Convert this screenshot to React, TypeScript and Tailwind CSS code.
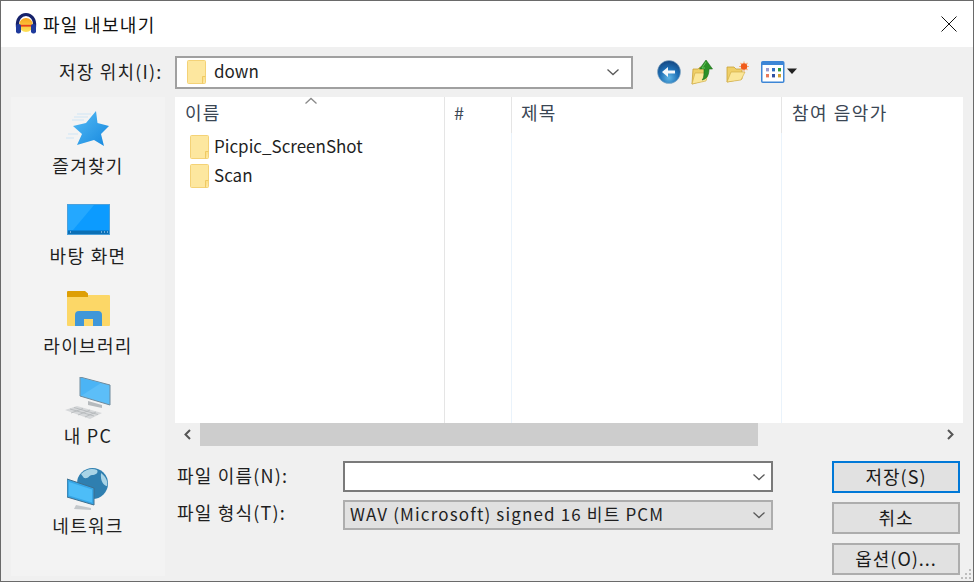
const FONT = "font-['Noto_Sans_CJK_KR','Noto_Sans',sans-serif]";

function AudacityIcon() {
  return (
    <svg width="24" height="24" viewBox="0 0 24 24" className="shrink-0">
      <defs>
        <linearGradient id="aud" x1="0" y1="0" x2="0" y2="1">
          <stop offset="0" stopColor="#f7a21c" />
          <stop offset="1" stopColor="#fde25a" />
        </linearGradient>
      </defs>
      <circle cx="12" cy="13" r="7" fill="url(#aud)" />
      <rect x="6" y="12.800" width="12" height="1.800" fill="#e8401c" />
      <path d="M3.500 15C2.500 7 7 2.500 12 2.500S21.500 7 20.500 15" fill="none" stroke="#16226a" strokeWidth="3.200" />
      <rect x="2" y="12" width="5" height="9.500" rx="2.200" fill="#1f3a9c" />
      <rect x="17" y="12" width="5" height="9.500" rx="2.200" fill="#1f3a9c" />
    </svg>
  );
}

function SmallFolder() {
  return (
    <svg width="19" height="24" viewBox="0 0 19 24" className="shrink-0">
      <rect x="0.500" y="0.500" width="18" height="23" rx="1" fill="#fde79f" stroke="#f4d277" />
      <path d="M15.500 23.500v-7h3" fill="#fbe08a" stroke="#efc964" />
    </svg>
  );
}

function BackIcon() {
  return (
    <svg width="24" height="24" viewBox="0 0 24 24">
      <defs>
        <radialGradient id="back" cx="0.5" cy="0.75" r="0.8">
          <stop offset="0" stopColor="#5fb6e6" />
          <stop offset="0.5" stopColor="#1d6fb5" />
          <stop offset="1" stopColor="#123f78" />
        </radialGradient>
      </defs>
      <circle cx="12" cy="12" r="11.500" fill="url(#back)" stroke="#8fb0c8" strokeWidth="0.600" />
      <path d="M18 10.500h-7V7l-6 5 6 5v-3.500h7z" fill="#f4f8fb" />
    </svg>
  );
}

function UpIcon() {
  return (
    <svg width="22" height="26" viewBox="0 0 22 26">
      <path d="M1 25L2 10h5l2-2h6v13z" fill="#efcf68" stroke="#c9a238" strokeWidth="0.800" />
      <path d="M1 25l3-11h13l-2 8z" fill="#fbe79a" stroke="#cfa93f" strokeWidth="0.600" />
      <path d="M11 21c2-2 2-5 2-11H8.500L15 1l6.500 9H18c0 6-2 10-7 11z" fill="#2c9128" stroke="#1d6f1a" strokeWidth="0.600" />
      <path d="M15 3l-4 6h3" fill="none" stroke="#63c45a" strokeWidth="1" />
    </svg>
  );
}

function NewFolderIcon() {
  return (
    <svg width="24" height="22" viewBox="0 0 24 22">
      <path d="M1 21L1 6h7l2 2h6v10z" fill="#efcf68" stroke="#c9a238" strokeWidth="0.800" />
      <path d="M1 21l4-10h14l-4 8z" fill="#fbe79a" stroke="#cfa93f" strokeWidth="0.600" />
      <path d="M18 0.500v10M13 5.500h10M14.500 2l7 7M21.500 2l-7 7" stroke="#f8b27a" strokeWidth="1.200" />
      <circle cx="18" cy="5.500" r="3.200" fill="#f05a1a" />
    </svg>
  );
}

function ViewsIcon() {
  const cells = [
    ["#9a9ad0", "#2f6fc0", "#2a9a3a"],
    ["#e8785a", "#2f4fa0", "#d0a030"],
  ];
  return (
    <svg width="37" height="22" viewBox="0 0 37 22">
      <rect x="0.750" y="0.750" width="22" height="20.500" rx="1" fill="#fff" stroke="#3d86d6" strokeWidth="1.500" />
      <rect x="1" y="1" width="21.500" height="3" fill="#3d86d6" />
      {cells.map((row, r) =>
        row.map((c, i) => <rect key={`${r}-${i}`} x={5 + i * 6} y={7 + r * 6} width="3" height="3.400" fill={c} />)
      )}
      <path d="M26 7.500h10l-5 5.500z" fill="#222" />
    </svg>
  );
}

function StarIcon() {
  return (
    <svg width="44" height="40" viewBox="0 0 44 40">
      <defs>
        <linearGradient id="star" x1="0" y1="0" x2="1" y2="1">
          <stop offset="0" stopColor="#57bdf6" />
          <stop offset="1" stopColor="#1587de" />
        </linearGradient>
      </defs>
      <path d="M11 5h14M8 8h14M6 11h12M2 25h10M0 29h8" stroke="#cfe6f6" strokeWidth="1.200" />
      <path d="M30 2l1.500 12L43 17l-8 8 3 12-10-6-17 5 5-11-9-8 13-3z" fill="url(#star)" strokeLinejoin="round" />
    </svg>
  );
}

function DesktopIcon() {
  return (
    <svg width="43" height="31" viewBox="0 0 43 31">
      <rect x="0.500" y="0.500" width="42" height="30" fill="#0c9bff" stroke="#4aa0dc" />
      <path d="M1 1h26L6 26H1z" fill="#24a8ff" />
      <rect x="1" y="26.500" width="41" height="3.500" fill="#0b6fb5" />
      <path d="M3 28h1M34 28h1M37 28h1M40 28h1" stroke="#cfeaff" strokeWidth="1.200" />
    </svg>
  );
}

function LibraryIcon() {
  return (
    <svg width="43" height="36" viewBox="0 0 43 36">
      <path d="M0 4h42a1 1 0 011 1v29a1 1 0 01-1 1H1a1 1 0 01-1-1z" fill="#fcd767" />
      <path d="M1 0h17l3 2.500V6H0V1a1 1 0 011-1z" fill="#de9f05" />
      <path d="M8 35V24a4 4 0 014-4h19a4 4 0 014 4v11H26v-7h-9v7z" fill="#3f97d9" />
    </svg>
  );
}

function PcIcon() {
  return (
    <svg width="46" height="42" viewBox="0 0 46 42">
      <path d="M15 0l30 8v20l-30-9z" fill="#5cbef8" stroke="#6f8a9c" strokeWidth="1" />
      <path d="M16 1l20 5-20 13z" fill="#4bb4f5" />
      <path d="M23 24l14 4v3l-14-3z" fill="#b6babd" />
      <path d="M0 33l12-4 25 7-12 6z" fill="#d6d8da" />
      <path d="M5 32l24 7M9 30.500l24 7M6 36l12-4.500M13 38l12-5M20 40l11-5" stroke="#b2b6b9" strokeWidth="0.800" />
    </svg>
  );
}

function NetworkIcon() {
  return (
    <svg width="42" height="44" viewBox="0 0 42 44">
      <circle cx="25.500" cy="15.500" r="15.500" fill="#2f7fb0" />
      <path d="M14 6c5-5 11-6 16-4 2 3-2 5-5 5s-3 4-8 3zM34 5c5 4 7 8 6 13-3 0-7-5-6-13z" fill="#a9d4e6" />
      <path d="M0 11l27 9v17L0 29z" fill="#37a6e6" stroke="#3f6f8e" strokeWidth="1" />
      <path d="M2 14l23 7.500v13L2 27.500z" fill="#4dbdf8" />
      <path d="M9 37l15 3v2l-17-1z" fill="#c4c8cb" />
    </svg>
  );
}

function Chevron() {
  return (
    <svg width="14" height="8" viewBox="0 0 14 8" className="shrink-0">
      <path d="M1.500 1.500L7 6.500l5.500-5" fill="none" stroke="#5a5a5a" strokeWidth="1.300" />
    </svg>
  );
}

function SideItem({ icon, label, className, gap }: { icon: React.ReactNode; label: string; className: string; gap: string }) {
  return (
    <div className={`flex flex-col items-center justify-end ${className}`}>
      <div className={`flex flex-1 items-end justify-center ${gap}`}>{icon}</div>
      <span className="text-[18px] leading-[24px] tracking-[1.300px] text-[#1f1f1f]">{label}</span>
    </div>
  );
}

function Column({ label, className }: { label: string; className: string }) {
  return (
    <div className={`flex h-full flex-col ${className}`}>
      <div className="h-[36px] border-r border-[#e5e5e5] pl-[9px] text-[18px] leading-[31px] tracking-[1.200px] text-[#3a4654]">{label}</div>
      <div className="flex-1 border-r border-[#eaf3fb]" />
    </div>
  );
}

function DialogButton({ label, primary }: { label: string; primary?: boolean }) {
  return (
    <button
      className={`flex h-[32px] w-[128px] items-center justify-center bg-[#e1e1e1] pb-[3px] text-[18px] leading-[24px] tracking-[1px] text-[#1a1a1a] ${
        primary ? "border-2 border-[#0078d7]" : "border-2 border-[#adadad]"
      }`}
    >
      {label}
    </button>
  );
}

export default function App() {
  return (
    <div className={`relative flex h-[582px] w-[974px] flex-col overflow-hidden border border-[#6a6a6a] bg-[#f0f0f0] ${FONT}`}>
      {/* Title bar */}
      <div className="flex h-[46px] shrink-0 items-center bg-white pl-[13px] pr-[16px]">
        <AudacityIcon />
        <span className="ml-[5px] text-[18px] tracking-[1.300px] text-[#111]">파일 내보내기</span>
        <svg width="16" height="16" viewBox="0 0 16 16" className="ml-auto">
          <path d="M0.500 0.500l15 15M15.500 0.500l-15 15" stroke="#111" strokeWidth="1" />
        </svg>
      </div>

      {/* Location row */}
      <div className="flex h-[50px] shrink-0 items-center">
        <span className="ml-[58px] w-[116px] pb-[2px] text-[18px] tracking-[1.200px] text-[#1f1f1f]">저장 위치(I):</span>
        <div className="flex h-[33px] w-[458px] items-center border-2 border-[#a0a0a0] bg-white pl-[10px] pr-[11px]">
          <SmallFolder />
          <span className="ml-[8px] pb-[2px] text-[17px] text-[#1f1f1f]">down</span>
          <span className="ml-auto"><Chevron /></span>
        </div>
        <div className="ml-[24px] flex items-center">
          <BackIcon />
          <span className="ml-[10px]"><UpIcon /></span>
          <span className="ml-[13px]"><NewFolderIcon /></span>
          <span className="ml-[11px]"><ViewsIcon /></span>
        </div>
      </div>

      <div className="flex min-h-0 flex-1 pb-[5px] pl-[10px] pr-[10px]">
        {/* Places bar */}
        <div className="flex w-[154px] shrink-0 flex-col bg-[#f3f3f3]">
          <SideItem icon={<StarIcon />} label="즐겨찾기" className="h-[80px]" gap="mb-[4px]" />
          <SideItem icon={<DesktopIcon />} label="바탕 화면" className="h-[90px]" gap="mb-[8px]" />
          <SideItem icon={<LibraryIcon />} label="라이브러리" className="h-[90px]" gap="mb-[6px]" />
          <SideItem icon={<PcIcon />} label="내 PC" className="h-[90px]" gap="mb-[4px]" />
          <SideItem icon={<NetworkIcon />} label="네트워크" className="h-[90px]" gap="mb-[1px]" />
        </div>

        <div className="ml-[10px] flex min-w-0 flex-1 flex-col">
          {/* File list */}
          <div className="relative flex h-[326px] shrink-0 bg-white">
            <div className="flex h-full w-[270px] flex-col border-r border-[#e5e5e5]">
              <div className="pl-[10px] text-[18px] leading-[31px] tracking-[1.200px] text-[#3a4654]">이름</div>
              <div className="mt-[4px] flex h-[29px] items-center gap-[5px] pl-[15px] text-[17px] text-[#1f1f1f]">
                <SmallFolder />
                <span className="pb-[2px]">Picpic_ScreenShot</span>
              </div>
              <div className="flex h-[29px] items-center gap-[5px] pl-[15px] text-[17px] text-[#1f1f1f]">
                <SmallFolder />
                <span className="pb-[2px]">Scan</span>
              </div>
            </div>
            <svg width="14" height="8" viewBox="0 0 14 8" className="absolute left-[129px] top-0">
              <path d="M1.500 6.500L7 1.500l5.500 5" fill="none" stroke="#8a8a8a" strokeWidth="1.300" />
            </svg>
            <Column label="#" className="w-[67px]" />
            <Column label="제목" className="w-[270px]" />
            <div className="h-[36px] flex-1 pl-[10px] text-[18px] leading-[31px] tracking-[1.500px] text-[#3a4654]">참여 음악가</div>
          </div>

          {/* Horizontal scrollbar */}
          <div className="flex h-[23px] shrink-0 items-center">
            <div className="flex h-full w-[25px] items-center justify-center">
              <svg width="9" height="11" viewBox="0 0 9 11">
                <path d="M7 1L2.500 5.500 7 10" fill="none" stroke="#555" strokeWidth="2" />
              </svg>
            </div>
            <div className="h-full w-[558px] bg-[#cdcdcd]" />
            <div className="ml-auto flex h-full w-[25px] items-center justify-center">
              <svg width="9" height="11" viewBox="0 0 9 11">
                <path d="M2 1l4.500 4.500L2 10" fill="none" stroke="#555" strokeWidth="2" />
              </svg>
            </div>
          </div>

          {/* Name and type fields, buttons */}
          <div className="flex flex-1 pt-[15px]">
            <div className="flex flex-col">
              <div className="flex h-[31px] items-center">
                <span className="w-[168px] pb-[2px] pl-[2px] text-[18px] tracking-[1.200px] text-[#1f1f1f]">파일 이름(N):</span>
                <div className="flex h-[31px] w-[430px] items-center justify-end border-2 border-[#7a7a7a] bg-white pr-[5px]">
                  <Chevron />
                </div>
              </div>
              <div className="mt-[8px] flex h-[30px] items-center">
                <span className="w-[168px] pb-[6px] pl-[2px] text-[18px] tracking-[1.200px] text-[#1f1f1f]">파일 형식(T):</span>
                <div className="flex h-[30px] w-[430px] items-center border-2 border-[#adadad] bg-[#e1e1e1] pl-[5px] pr-[5px]">
                  <span className="pb-[2px] text-[17px] tracking-[1.150px] text-[#1f1f1f]">WAV (Microsoft) signed 16 비트 PCM</span>
                  <span className="ml-auto"><Chevron /></span>
                </div>
              </div>
            </div>
            <div className="ml-[59px] flex flex-col gap-[9px]">
              <DialogButton label="저장(S)" primary />
              <DialogButton label="취소" />
              <DialogButton label="옵션(O)..." />
            </div>
          </div>
        </div>
      </div>

      {/* Resize grip */}
      <svg width="12" height="12" viewBox="0 0 12 12" className="absolute bottom-[1px] right-[1px]">
        <path d="M9 1h2v2H9zM9 5h2v2H9zM5 5h2v2H5zM9 9h2v2H9zM5 9h2v2H5zM1 9h2v2H1z" fill="#bdbdbd" />
      </svg>
    </div>
  );
}
